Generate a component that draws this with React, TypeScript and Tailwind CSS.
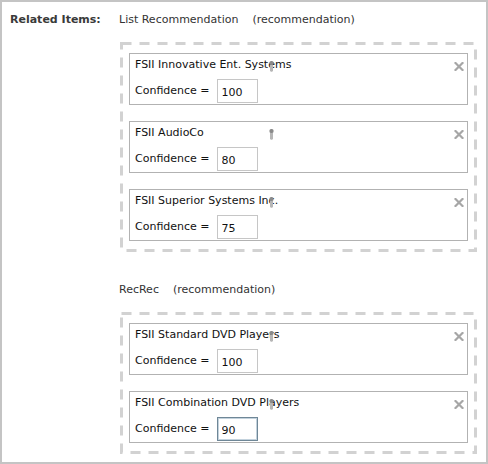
import React from "react";

// Related items panel: two recommendation groups, each with dashed drop zone of item cards
type Item = { name: string; confidence: number; focused?: boolean };

const GROUPS: { title: string; kind: string; items: Item[] }[] = [
  {
    title: "List Recommendation",
    kind: "(recommendation)",
    items: [
      { name: "FSII Innovative Ent. Systems", confidence: 100 },
      { name: "FSII AudioCo", confidence: 80 },
      { name: "FSII Superior Systems Inc.", confidence: 75 },
    ],
  },
  {
    title: "RecRec",
    kind: "(recommendation)",
    items: [
      { name: "FSII Standard DVD Players", confidence: 100 },
      { name: "FSII Combination DVD Players", confidence: 90, focused: true },
    ],
  },
];

const FONT = "font-['DejaVu_Sans',sans-serif] text-[11px]";

function Handle() {
  return (
    <svg width="5" height="11" viewBox="0 0 5 11" className="absolute left-[139px] top-[7px]">
      <rect x="0.5" y="0" width="4" height="4" rx="1.5" fill="#8a8a8a" />
      <rect x="1" y="4" width="3" height="6" fill="#b6b6b6" />
      <rect x="1.5" y="10" width="2" height="1" fill="#c8c8c8" />
    </svg>
  );
}

function CloseIcon() {
  return (
    <svg width="10" height="9" viewBox="0 0 10 9" className="absolute right-[3px] top-[8px]">
      <path d="M1.5 1 L8.5 8 M8.5 1 L1.5 8" stroke="#a6a6a6" strokeWidth="2.2" strokeLinecap="square" />
    </svg>
  );
}

// long-dash outline (browser dashed borders are too short)
function DashedFrame() {
  return (
    <svg className="pointer-events-none absolute inset-0 h-full w-full">
      <rect
        x="1.5"
        y="1.5"
        className="[width:calc(100%_-_3px)] [height:calc(100%_-_3px)]"
        fill="none"
        stroke="#d2d2d2"
        strokeWidth="3"
        strokeDasharray="10 8"
      />
    </svg>
  );
}

function ItemCard({ item }: { item: Item }) {
  return (
    <div className="relative h-[52px] border border-[#b2b2b2] bg-white pl-[5px] pt-[4px]">
      <div className="h-[14px] leading-[14px] text-[#111]">{item.name}</div>
      <div className="mt-[7px] flex items-center">
        <span className="text-[#111]">Confidence =</span>
        <input
          readOnly
          value={item.confidence}
          className={`ml-[7px] h-[24px] w-[41px] bg-white pl-[4px] pt-[2px] text-[11px] text-[#111] outline-none ${
            item.focused
              ? "border border-[#6f8797] shadow-[inset_0_0_0_1px_#c3d2dd]"
              : "border border-[#c6c6c6]"
          }`}
        />
      </div>
      <Handle />
      <CloseIcon />
    </div>
  );
}

export default function App() {
  return (
    <div className={`flex h-[464px] w-[488px] border-2 border-[#c4c4c4] bg-white ${FONT}`}>
      <div className="w-[117px] shrink-0 pl-[8px] pt-[10px]">
        <div className="h-[16px] leading-[16px] font-bold text-[#3a3a3a]">Related Items:</div>
      </div>
      <div className="flex-1 pr-[9px] pt-[10px]">
        {GROUPS.map((g, gi) => (
          <section key={g.title} className={gi > 0 ? "mt-[30px]" : ""}>
            <div className="flex h-[16px] leading-[16px] text-[#333]">
              <span>{g.title}</span>
              <span className="ml-[14px]">{g.kind}</span>
            </div>
            <div className="relative ml-px mt-[14px] flex flex-col gap-[16px] p-[3px]">
              <DashedFrame />
              <div className="flex flex-col gap-[16px] px-[6px] py-[8px]">
                {g.items.map((it) => (
                  <ItemCard key={it.name} item={it} />
                ))}
              </div>
            </div>
          </section>
        ))}
      </div>
    </div>
  );
}
